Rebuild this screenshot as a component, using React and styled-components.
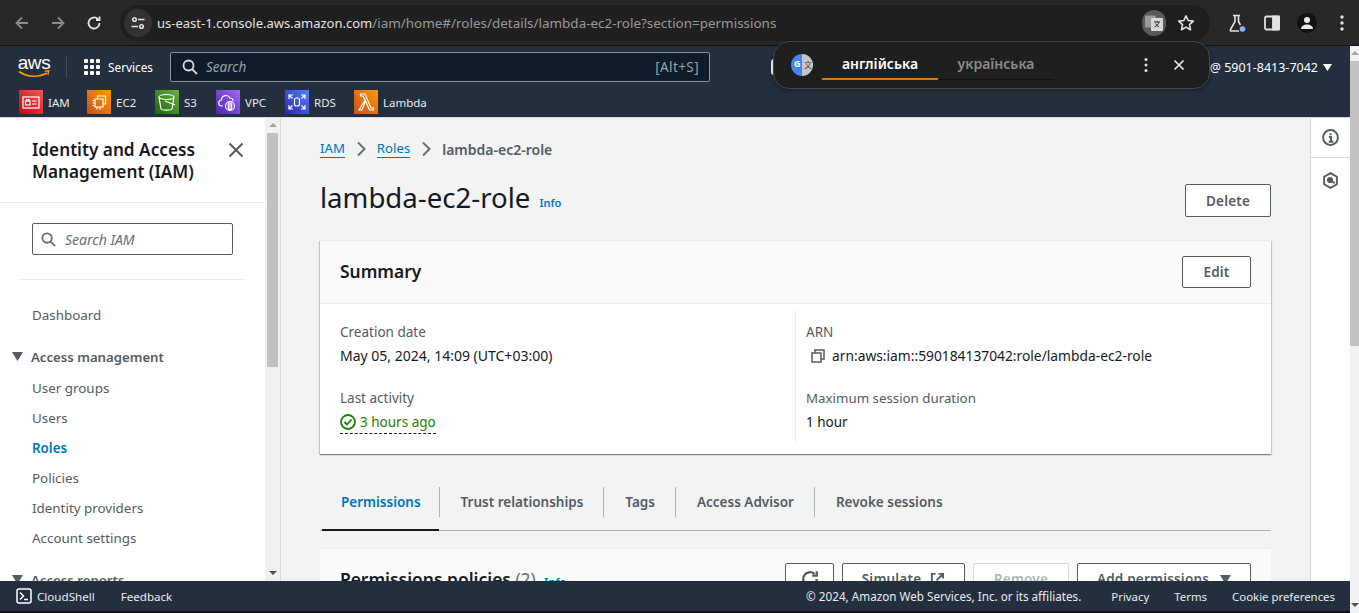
import React from "react";
import styled, { createGlobalStyle } from "styled-components";

const GlobalStyle = createGlobalStyle`
	html, body {
		margin: 0;
		padding: 0;
		height: 100%;
		overflow: hidden;
		background: #fff;
		font-family: "Noto Sans", "Open Sans", sans-serif;
	}
	* { box-sizing: border-box; }
`;

const services = [
	{ name: "IAM", from: "#bd0816", to: "#ff5252", icon: "iam", w: 68 },
	{ name: "EC2", from: "#c8511b", to: "#ff9900", icon: "ec2", w: 68 },
	{ name: "S3", from: "#1b660f", to: "#6cae3e", icon: "s3", w: 61 },
	{ name: "VPC", from: "#4d27a8", to: "#a166ff", icon: "vpc", w: 69 },
	{ name: "RDS", from: "#2e27ad", to: "#527fff", icon: "rds", w: 69 },
	{ name: "Lambda", from: "#c8511b", to: "#ff9900", icon: "lambda", w: 80 },
];

const navItems = ["User groups", "Users", "Roles", "Policies", "Identity providers", "Account settings"];

const tabs = ["Permissions", "Trust relationships", "Tags", "Access Advisor", "Revoke sessions"];

function ServiceGlyph({ icon }) {
	const p = { fill: "none", stroke: "#fff", strokeWidth: 1.2 };
	if (icon === "iam")
		return (
			<svg width="24" height="24" viewBox="0 0 24 24">
				<rect x="4" y="7" width="16" height="11" {...p} />
				<rect x="6.500" y="11" width="4.500" height="4" {...p} />
				<path d="M7.500 11V9.500h2.500V11M13 11h4.500M13 14h4.500" {...p} />
			</svg>
		);
	if (icon === "ec2")
		return (
			<svg width="24" height="24" viewBox="0 0 24 24">
				<path d="M8 9h8v8H8zM10.500 9V6h8v8H16M5.500 10.500H8M5.500 13H8M5.500 15.500H8M10 17v2.500M13 17v2.500" {...p} />
			</svg>
		);
	if (icon === "s3")
		return (
			<svg width="24" height="24" viewBox="0 0 24 24">
				<ellipse cx="11.500" cy="7" rx="7.500" ry="2.500" {...p} />
				<path d="M4 7l2 12c1 1.500 10 1.500 11 0l2-12M10 11l10 4" {...p} />
			</svg>
		);
	if (icon === "vpc")
		return (
			<svg width="24" height="24" viewBox="0 0 24 24">
				<path d="M7 16H6a3 3 0 0 1-.5-6A4.500 4.500 0 0 1 14 8a3 3 0 0 1 3 3" {...p} />
				<circle cx="14" cy="16" r="4.500" {...p} />
				<path d="M14 11.500v9M12.300 12.500v7h3.400v-7" {...p} />
			</svg>
		);
	if (icon === "rds")
		return (
			<svg width="24" height="24" viewBox="0 0 24 24">
				<rect x="9.500" y="8" width="5" height="8" rx="2" {...p} />
				<path d="M4 9V5h4M20 9V5h-4M4 15v4h4M20 15v4h-4M4 5l3.500 3.500M20 5l-3.500 3.500M4 19l3.500-3.500M20 19l-3.500-3.500" {...p} />
			</svg>
		);
	return (
		<svg width="24" height="24" viewBox="0 0 24 24">
			<path d="M5 20l6-10-2-4H6.500V4H11l6 14h2.500v2H15.500L11.500 11 8 20z" {...p} />
		</svg>
	);
}

function Triangle({ size = 10, color = "#545b64" }) {
	return (
		<svg width={size} height={size} viewBox="0 0 10 10">
			<path d="M0 1h10L5 9z" fill={color} />
		</svg>
	);
}

export default function App() {
	return (
		<>
			<GlobalStyle />
			<Window>
				<ChromeBar>
					<NavGlyph $dim>
						<path d="M16 10H5M10 4.500 4.500 10l5.500 5.500" />
					</NavGlyph>
					<NavGlyph $dim>
						<path d="M4 10h11M10 4.500l5.500 5.500-5.500 5.500" />
					</NavGlyph>
					<NavGlyph>
						<path d="M15.500 10a5.500 5.500 0 1 1-1.600-3.900M15.500 3.500v3.500H12" />
					</NavGlyph>
					<Omnibox>
						<SiteInfo>
							<svg width="16" height="16" viewBox="0 0 16 16" fill="none" stroke="#e3e3e3" strokeWidth="1.500">
								<circle cx="4.500" cy="4.500" r="1.800" />
								<circle cx="11.500" cy="11.500" r="1.800" />
								<path d="M8 4.500h6.500M1.500 11.500H8" />
							</svg>
						</SiteInfo>
						<UrlText>
							us-east-1.console.aws.amazon.com<UrlRest>/iam/home#/roles/details/lambda-ec2-role?section=permissions</UrlRest>
						</UrlText>
						<OmniRight>
							<TranslateChip>
								<svg width="20" height="20" viewBox="0 0 20 20">
									<rect x="1" y="2.500" width="11" height="12" rx="1" fill="#9a9a9a" />
									<rect x="7" y="5" width="12" height="13" rx="1" fill="#d8d8d8" />
									<path d="M10 9h6M13 8v1.500M15 9c-.7 2.500-2.500 4-4.500 5M11.500 10.500c.8 1.500 2 2.800 3.500 3.500" fill="none" stroke="#333" strokeWidth="1" />
								</svg>
							</TranslateChip>
							<svg width="20" height="20" viewBox="0 0 20 20" fill="none" stroke="#e3e3e3" strokeWidth="1.600" strokeLinejoin="round">
								<path d="M10 2.800l2.200 4.700 5.100.6-3.800 3.500 1 5.100-4.500-2.600-4.500 2.600 1-5.100L2.700 8.100l5.100-.6z" />
							</svg>
						</OmniRight>
					</Omnibox>
					<ChromeTools>
						<svg width="20" height="20" viewBox="0 0 20 20" fill="none" stroke="#e3e3e3" strokeWidth="1.600">
							<path d="M6 2.500h7M8 2.500v6L3.500 16.500c-.4.800 0 1.500.9 1.500H12M11.500 2.500v6l2 3.500" />
							<circle cx="15.500" cy="16" r="2.800" fill="#8ab4f8" stroke="none" />
						</svg>
						<svg width="20" height="20" viewBox="0 0 20 20" fill="none" stroke="#e3e3e3" strokeWidth="1.800">
							<rect x="3" y="3.500" width="14" height="13" rx="1.500" />
							<rect x="11" y="3.500" width="6" height="13" fill="#e3e3e3" />
						</svg>
						<ProfileDot>
							<svg width="14" height="14" viewBox="0 0 14 14" fill="#e8eaed">
								<circle cx="7" cy="4" r="3" />
								<path d="M1 13c0-3 3-4.500 6-4.500s6 1.500 6 4.500z" />
							</svg>
						</ProfileDot>
						<svg width="20" height="20" viewBox="0 0 20 20" fill="#e3e3e3">
							<circle cx="10" cy="4" r="1.700" />
							<circle cx="10" cy="10" r="1.700" />
							<circle cx="10" cy="16" r="1.700" />
						</svg>
					</ChromeTools>
				</ChromeBar>

				<Viewport>
					<PageColumn>
						<AwsHeader>
							<TopRow>
								<AwsLogo>
									<AwsWord>aws</AwsWord>
									<svg width="32" height="9" viewBox="0 0 32 9" fill="none">
										<path d="M1 1.500c8 6 20 6 28 1.500" stroke="#ff9900" strokeWidth="1.600" />
										<path d="M26.500 1.200l4.300-.4-.9 4.200" stroke="#ff9900" strokeWidth="1.300" />
									</svg>
								</AwsLogo>
								<HeaderDivider />
								<ServicesMenu>
									<GridDots>
										{Array.from({ length: 9 }).map((_, i) => (
											<i key={i} />
										))}
									</GridDots>
									<span>Services</span>
								</ServicesMenu>
								<GlobalSearch>
									<svg width="16" height="16" viewBox="0 0 16 16" fill="none" stroke="#d5dbdb" strokeWidth="1.800">
										<circle cx="6.500" cy="6.500" r="5" />
										<path d="M10 10l5 5" />
									</svg>
									<SearchHint>Search</SearchHint>
									<Shortcut>[Alt+S]</Shortcut>
								</GlobalSearch>
								<HiddenGlyph />
								<AccountMenu>
									<span>@ 5901-8413-7042</span>
									<Triangle size={9} color="#fff" />
								</AccountMenu>
							</TopRow>
							<ShortcutRow>
								{services.map((s) => (
									<ServiceLink key={s.name} $w={s.w}>
										<ServiceIcon $from={s.from} $to={s.to}>
											<ServiceGlyph icon={s.icon} />
										</ServiceIcon>
										<span>{s.name}</span>
									</ServiceLink>
								))}
							</ShortcutRow>
						</AwsHeader>

						<Body>
							<SideNav>
								<SideTitleRow>
									<SideTitle>Identity and Access Management (IAM)</SideTitle>
									<svg width="16" height="16" viewBox="0 0 16 16" stroke="#545b64" strokeWidth="2" fill="none">
										<path d="M1.500 1.500l13 13M14.500 1.500l-13 13" />
									</svg>
								</SideTitleRow>
								<SideSearchWrap>
									<SideSearch>
										<svg width="15" height="15" viewBox="0 0 16 16" fill="none" stroke="#687078" strokeWidth="2">
											<circle cx="6.500" cy="6.500" r="5" />
											<path d="M10 10l5 5" />
										</svg>
										<span>Search IAM</span>
									</SideSearch>
								</SideSearchWrap>
								<NavLink $first>Dashboard</NavLink>
								<SectionHead>
									<Triangle size={11} />
									<span>Access management</span>
								</SectionHead>
								{navItems.map((n) => (
									<NavLink key={n} $active={n === "Roles"}>
										{n}
									</NavLink>
								))}
								<SectionHead>
									<Triangle size={11} />
									<span>Access reports</span>
								</SectionHead>
							</SideNav>
							<SideScroll>
								<ScrollArrow />
								<SideThumb />
								<ScrollFill />
								<ScrollArrow $down />
							</SideScroll>

							<Main>
								<Crumbs>
									<CrumbLink>IAM</CrumbLink>
									<CrumbSep viewBox="0 0 10 16">
										<path d="M2 1.500L8.500 8 2 14.500" />
									</CrumbSep>
									<CrumbLink>Roles</CrumbLink>
									<CrumbSep viewBox="0 0 10 16">
										<path d="M2 1.500L8.500 8 2 14.500" />
									</CrumbSep>
									<CrumbCurrent>lambda-ec2-role</CrumbCurrent>
								</Crumbs>
								<TitleRow>
									<PageTitle>lambda-ec2-role</PageTitle>
									<TitleInfo>Info</TitleInfo>
									<Spacer />
									<Button $w={86} $h={33}>Delete</Button>
								</TitleRow>

								<Card>
									<CardHead>
										<CardTitle>Summary</CardTitle>
										<Button $w={69} $h={32}>Edit</Button>
									</CardHead>
									<SummaryGrid>
										<SummaryCol>
											<Field>
												<FieldLabel>Creation date</FieldLabel>
												<FieldValue>May 05, 2024, 14:09 (UTC+03:00)</FieldValue>
											</Field>
											<Field>
												<FieldLabel>Last activity</FieldLabel>
												<ActivityValue>
													<svg width="16" height="16" viewBox="0 0 16 16" fill="none" stroke="#1d8102" strokeWidth="1.800">
														<circle cx="8" cy="8" r="7" />
														<path d="M4.500 8l2.500 2.500 4.500-5" />
													</svg>
													<span>3 hours ago</span>
												</ActivityValue>
											</Field>
										</SummaryCol>
										<SummaryCol $right>
											<Field>
												<FieldLabel>ARN</FieldLabel>
												<ArnValue>
													<svg width="14" height="14" viewBox="0 0 14 14" fill="none" stroke="#545b64" strokeWidth="1.500">
														<rect x="1" y="4" width="9" height="9" />
														<path d="M4 4V1h9v9h-3" />
													</svg>
													<span>arn:aws:iam::590184137042:role/lambda-ec2-role</span>
												</ArnValue>
											</Field>
											<Field>
												<SessionLabel>Maximum session duration</SessionLabel>
												<ShortValue>1 hour</ShortValue>
											</Field>
										</SummaryCol>
									</SummaryGrid>
								</Card>

								<TabBar>
									{tabs.map((t, i) => (
										<Tab key={t} $active={i === 0} $last={i === tabs.length - 1}>
											{t}
										</Tab>
									))}
								</TabBar>

								<PolicyCard>
									<PolicyTitle>
										Permissions policies <Count>(2)</Count> <PolicyInfo>Info</PolicyInfo>
									</PolicyTitle>
									<PolicyActions>
										<Button $w={49} $h={32}>
											<svg width="18" height="18" viewBox="0 0 16 16" fill="none" stroke="#545b64" strokeWidth="2">
												<path d="M14 8a6 6 0 1 1-2-4.500M14 1v4h-4" />
											</svg>
										</Button>
										<Button $w={123} $h={32} $gap={9}>
											Simulate
											<svg width="15" height="15" viewBox="0 0 16 16" fill="none" stroke="#545b64" strokeWidth="2">
												<path d="M6 2H2v12h12v-4M9 2h5v5M14 2L7 9" />
											</svg>
										</Button>
										<Button $w={96} $h={32} $disabled>Remove</Button>
										<Button $w={174} $h={32} $gap={11}>
											Add permissions
											<Triangle size={11} />
										</Button>
									</PolicyActions>
								</PolicyCard>
							</Main>

							<Rail>
								<RailSlot $line>
									<svg width="17" height="17" viewBox="0 0 16 16" fill="none" stroke="#545b64" strokeWidth="1.800">
										<circle cx="8" cy="8" r="7" />
										<path d="M6.500 7.500H8.500V12M6.300 12h4.400M8 4v1.800" />
									</svg>
								</RailSlot>
								<RailSlot>
									<svg width="17" height="17" viewBox="0 0 16 16" fill="none" stroke="#545b64" strokeWidth="1.800">
										<path d="M8 1l6 3.500v7L8 15l-6-3.500v-7z" />
										<circle cx="7.500" cy="7.500" r="2" fill="#545b64" />
										<path d="M8.500 8l3.500 2.500" />
									</svg>
								</RailSlot>
							</Rail>
						</Body>

						<Footer>
							<FooterLink>
								<svg width="16" height="16" viewBox="0 0 16 16" fill="none" stroke="#fff" strokeWidth="1.500">
									<rect x="1" y="1" width="14" height="14" rx="2" />
									<path d="M4 4.500L7.500 8 4 11.500M8 11.500h4" />
								</svg>
								<span>CloudShell</span>
							</FooterLink>
							<FeedbackLink>Feedback</FeedbackLink>
							<Spacer />
							<Copyright>© 2024, Amazon Web Services, Inc. or its affiliates.</Copyright>
							<FooterNav>
								<span>Privacy</span>
								<span>Terms</span>
								<span>Cookie preferences</span>
							</FooterNav>
						</Footer>
					</PageColumn>
					<PageScroll>
						<ScrollArrow />
						<PageThumb />
						<ScrollFill />
						<ScrollArrow $down />
					</PageScroll>
				</Viewport>

				<TranslatePopup>
					<TranslateBadge>
						<BadgeG>G</BadgeG>
						<BadgeWen>文</BadgeWen>
					</TranslateBadge>
					<LangTab $active>англійська</LangTab>
					<LangTab>українська</LangTab>
					<Spacer />
					<svg width="16" height="16" viewBox="0 0 16 16" fill="#e3e3e3">
						<circle cx="8" cy="2.500" r="1.500" />
						<circle cx="8" cy="8" r="1.500" />
						<circle cx="8" cy="13.500" r="1.500" />
					</svg>
					<PopupClose viewBox="0 0 12 12">
						<path d="M1.500 1.500l9 9M10.500 1.500l-9 9" />
					</PopupClose>
				</TranslatePopup>
			</Window>
		</>
	);
}

const Window = styled.div`
	position: relative;
	width: 1359px;
	height: 613px;
	overflow: hidden;
	display: flex;
	flex-direction: column;
`;

const ChromeBar = styled.div`
	height: 46px;
	flex: none;
	background: #282828;
	border-bottom: 1px solid #111;
	display: flex;
	align-items: center;
	padding-left: 12px;
	gap: 16px;
`;

const NavGlyph = styled.svg.attrs({ width: 20, height: 20, viewBox: "0 0 20 20" })`
	flex: none;
	fill: none;
	stroke: ${(p) => (p.$dim ? "#8c8c8c" : "#e3e3e3")};
	stroke-width: 1.8;
`;

const Omnibox = styled.div`
	flex: none;
	width: 1090px;
	height: 36px;
	border-radius: 18px;
	background: #1f1f1f;
	display: flex;
	align-items: center;
	padding: 0 14px 0 4px;
`;

const SiteInfo = styled.div`
	width: 28px;
	height: 28px;
	border-radius: 50%;
	background: #333;
	display: flex;
	align-items: center;
	justify-content: center;
`;

const UrlText = styled.div`
	margin-left: 5px;
	font-size: 13px;
	color: #e3e3e3;
	white-space: nowrap;
`;

const UrlRest = styled.span`
	color: #9a9a9a;
	font-size: 13.45px;
`;

const OmniRight = styled.div`
	margin-left: auto;
	display: flex;
	align-items: center;
	gap: 10px;
`;

const TranslateChip = styled.div`
	width: 24px;
	height: 26px;
	border-radius: 12px;
	background: #5a5a5a;
	display: flex;
	align-items: center;
	justify-content: center;
`;

const ChromeTools = styled.div`
	display: flex;
	align-items: center;
	gap: 15px;
	margin-left: 1px;
`;

const ProfileDot = styled.div`
	width: 20px;
	height: 20px;
	border-radius: 50%;
	background: #111;
	display: flex;
	align-items: center;
	justify-content: center;
`;

const Viewport = styled.div`
	flex: 1;
	min-height: 0;
	display: flex;
`;

const PageColumn = styled.div`
	flex: 1;
	min-width: 0;
	display: flex;
	flex-direction: column;
`;

const AwsHeader = styled.header`
	flex: none;
	height: 71px;
	background: #232f3e;
	color: #fff;
`;

const TopRow = styled.div`
	height: 42px;
	display: flex;
	align-items: center;
	padding-left: 18px;
`;

const AwsLogo = styled.div`
	width: 32px;
	height: 28px;
	display: flex;
	flex-direction: column;
	align-items: center;
	svg {
		margin-top: -3px;
	}
`;

const AwsWord = styled.span`
	font-family: "Liberation Sans", sans-serif;
	font-size: 19px;
	line-height: 20px;
	letter-spacing: -0.4px;
	color: #fff;
`;

const HeaderDivider = styled.div`
	width: 1px;
	height: 22px;
	background: #3f4b5b;
	margin: 0 17px 0 16px;
`;

const ServicesMenu = styled.div`
	display: flex;
	align-items: center;
	gap: 8px;
	font-size: 11.8px;
	width: 86px;
`;

const GridDots = styled.div`
	display: grid;
	grid-template-columns: repeat(3, 4px);
	grid-auto-rows: 4px;
	gap: 2px;
	i {
		background: #fff;
		border-radius: 1px;
	}
`;

const GlobalSearch = styled.div`
	width: 540px;
	height: 30px;
	background: #0f1b2a;
	border: 1px solid #879596;
	border-radius: 2px;
	display: flex;
	align-items: center;
	padding: 0 10px 0 11px;
	color: #95a5a6;
	font-size: 13.5px;
`;

const SearchHint = styled.span`
	font-style: italic;
	margin-left: 8px;
`;

const Shortcut = styled.span`
	margin-left: auto;
	letter-spacing: 0.4px;
`;

const HiddenGlyph = styled.div`
	width: 14px;
	height: 16px;
	margin-left: 61px;
	border-radius: 3px;
	background: #fff;
`;

const AccountMenu = styled.div`
	margin-left: auto;
	margin-right: 18px;
	display: flex;
	align-items: center;
	gap: 5px;
	font-size: 12.5px;
	color: #fff;
`;

const ShortcutRow = styled.div`
	height: 29px;
	display: flex;
	align-items: flex-start;
	padding: 2px 0 0 19px;
`;

const ServiceLink = styled.div`
	flex: none;
	width: ${(p) => p.$w}px;
	display: flex;
	align-items: center;
	gap: 5px;
	font-size: 11.5px;
	color: #eaeded;
	height: 24px;
`;

const ServiceIcon = styled.div`
	width: 24px;
	height: 24px;
	background: linear-gradient(to top right, ${(p) => p.$from}, ${(p) => p.$to});
	display: flex;
`;

const Body = styled.div`
	flex: 1;
	min-height: 0;
	display: flex;
	overflow: hidden;
	background: #f2f3f3;
	border-top: 1px solid #d5dbdb;
`;

const SideNav = styled.nav`
	flex: none;
	width: 265px;
	background: #fff;
	overflow: hidden;
`;

const SideTitleRow = styled.div`
	height: 85px;
	padding: 21px 21px 0 32px;
	display: flex;
	justify-content: space-between;
	align-items: flex-start;
	border-bottom: 1px solid #eaeded;
	svg {
		flex: none;
		margin-top: 3px;
	}
`;

const SideTitle = styled.h2`
	margin: 0;
	width: 185px;
	font-size: 17.2px;
	line-height: 22px;
	font-weight: 600;
	color: #16191f;
`;

const SideSearchWrap = styled.div`
	margin: 0 20px;
	padding: 20px 12px 24px;
	border-bottom: 1px solid #eaeded;
`;

const SideSearch = styled.div`
	width: 201px;
	height: 32px;
	border: 1px solid #545b64;
	border-radius: 2px;
	display: flex;
	align-items: center;
	gap: 9px;
	padding-left: 8px;
	font-size: 14px;
	font-style: italic;
	color: #687078;
`;

const NavLink = styled.div`
	height: 30px;
	line-height: 30px;
	padding-left: 32px;
	font-size: 13.4px;
	color: ${(p) => (p.$active ? "#0073bb" : "#545b64")};
	font-weight: ${(p) => (p.$active ? 600 : 400)};
	margin-top: ${(p) => (p.$first ? 20 : 0)}px;
`;

const SectionHead = styled.div`
	height: 32px;
	padding: 0 0 1px 12px;
	display: flex;
	align-items: center;
	gap: 8px;
	margin-top: 11px;
	font-size: 13.2px;
	font-weight: 600;
	color: #545b64;
`;

const SideScroll = styled.div`
	flex: none;
	width: 16px;
	background: #f1f1f1;
	border-right: 1px solid #d5dbdb;
	display: flex;
	flex-direction: column;
	align-items: center;
`;

const ScrollArrow = styled.div`
	flex: none;
	height: 15px;
	width: 100%;
	position: relative;
	&::after {
		content: "";
		position: absolute;
		left: calc(50% - 4px);
		top: 5px;
		border-left: 4px solid transparent;
		border-right: 4px solid transparent;
		${(p) => (p.$down ? "border-top: 4px solid #505050;" : "border-bottom: 4px solid #a3a3a3;")}
	}
`;

const SideThumb = styled.div`
	flex: none;
	width: 11px;
	height: 234px;
	background: #c1c1c1;
`;

const ScrollFill = styled.div`
	flex: 1;
`;

const Main = styled.main`
	flex: 1;
	min-width: 0;
	padding: 0 39px;
	overflow: hidden;
`;

const Crumbs = styled.div`
	height: 52px;
	padding-top: 10px;
	display: flex;
	align-items: center;
	gap: 11px;
	font-size: 13.2px;
`;

const CrumbLink = styled.span`
	color: #0073bb;
	border-bottom: 1px solid #0073bb;
	line-height: 17px;
`;

const CrumbSep = styled.svg`
	width: 10px;
	height: 16px;
	fill: none;
	stroke: #687078;
	stroke-width: 2;
`;

const CrumbCurrent = styled.span`
	color: #545b64;
	font-size: 14px;
	font-weight: 600;
`;

const TitleRow = styled.div`
	height: 70px;
	padding-top: 14px;
	display: flex;
	align-items: flex-start;
`;

const PageTitle = styled.h1`
	margin: -5px 0 0;
	font-size: 27.6px;
	font-weight: 400;
	color: #16191f;
	line-height: 36px;
`;

const InfoLink = styled.span`
	font-size: 11px;
	font-weight: 600;
	color: #0073bb;
`;

const TitleInfo = styled(InfoLink)`
	margin: 11px 0 0 9px;
`;

const PolicyInfo = styled(InfoLink)`
	margin-left: 4px;
`;

const Spacer = styled.div`
	flex: 1;
`;

const Button = styled.div`
	flex: none;
	width: ${(p) => p.$w}px;
	height: ${(p) => p.$h}px;
	background: #fff;
	border: 1px solid ${(p) => (p.$disabled ? "#d5dbdb" : "#545b64")};
	border-radius: 2px;
	display: flex;
	align-items: center;
	justify-content: center;
	gap: ${(p) => p.$gap || 8}px;
	font-size: 13.5px;
	letter-spacing: 0.2px;
	font-weight: 600;
	color: ${(p) => (p.$disabled ? "#aab7b8" : "#545b64")};
`;

const Card = styled.section`
	height: 214px;
	background: #fff;
	border-top: 1px solid #eaeded;
	box-shadow: 0 1px 1px 0 rgba(0, 28, 36, 0.3), 1px 1px 1px 0 rgba(0, 28, 36, 0.15), -1px 1px 1px 0 rgba(0, 28, 36, 0.15);
`;

const CardHead = styled.div`
	height: 63px;
	background: #fafafa;
	border-bottom: 1px solid #eaeded;
	display: flex;
	align-items: center;
	justify-content: space-between;
	padding: 0 20px;
`;

const CardTitle = styled.h2`
	margin: 0 0 2px;
	font-size: 17.4px;
	font-weight: 600;
	color: #16191f;
`;

const SummaryGrid = styled.div`
	display: grid;
	grid-template-columns: 475px 1fr;
	padding-top: 6px;
`;

const SummaryCol = styled.div`
	height: 133px;
	padding-left: ${(p) => (p.$right ? 10 : 20)}px;
	border-left: ${(p) => (p.$right ? "1px solid #eaeded" : "none")};
	display: flex;
	flex-direction: column;
	gap: 24px;
	padding-top: 13px;
`;

const Field = styled.div`
	display: flex;
	flex-direction: column;
	gap: 6px;
	font-size: 13.5px;
	line-height: 18px;
`;

const FieldLabel = styled.div`
	color: #545b64;
`;

const SessionLabel = styled(FieldLabel)`
	font-size: 13.3px;
`;

const FieldValue = styled.div`
	color: #16191f;
	font-size: 14px;
`;

const ShortValue = styled.div`
	color: #16191f;
`;

const ActivityValue = styled.div`
	align-self: flex-start;
	display: flex;
	align-items: center;
	gap: 4px;
	color: #1d8102;
	border-bottom: 1px dashed #16191f;
	padding-bottom: 2px;
`;

const ArnValue = styled.div`
	display: flex;
	align-items: center;
	gap: 7px;
	padding-left: 5px;
	font-size: 13.8px;
	color: #16191f;
`;

const TabBar = styled.div`
	margin-top: 33px;
	height: 44px;
	padding-left: 2px;
	border-bottom: 1px solid #aab7b8;
	display: flex;
`;

const Tab = styled.div`
	position: relative;
	height: 44px;
	padding: 0 20px ${(p) => (p.$active ? 12 : 14)}px 22px;
	display: flex;
	align-items: center;
	font-size: 13.5px;
	font-weight: 600;
	white-space: nowrap;
	color: ${(p) => (p.$active ? "#0073bb" : "#545b64")};
	border-bottom: ${(p) => (p.$active ? "2px solid #16191f" : "none")};
	${(p) => p.$active && "padding-left: 19px; padding-right: 18px;"}
	&::after {
		content: "";
		display: ${(p) => (p.$last ? "none" : "block")};
		position: absolute;
		right: -1px;
		top: 0;
		width: 1px;
		height: 30px;
		background: #aab7b8;
	}
`;

const PolicyCard = styled.section`
	margin-top: 17px;
	height: 100px;
	background: #fafafa;
	border-top: 1px solid #eaeded;
	display: flex;
	justify-content: space-between;
	align-items: flex-start;
	padding: 14px 20px 0;
`;

const PolicyTitle = styled.h2`
	margin: 0;
	font-size: 17.4px;
	line-height: 32px;
	font-weight: 600;
	color: #16191f;
`;

const Count = styled.span`
	font-weight: 400;
	color: #687078;
`;

const PolicyActions = styled.div`
	display: flex;
	gap: 8px;
`;

const Rail = styled.aside`
	flex: none;
	width: 40px;
	background: #fff;
	border-left: 1px solid #d5dbdb;
`;

const RailSlot = styled.div`
	height: ${(p) => (p.$line ? 40 : 44)}px;
	display: flex;
	align-items: center;
	justify-content: center;
	border-bottom: ${(p) => (p.$line ? "1px solid #d5dbdb" : "none")};
`;

const Footer = styled.footer`
	flex: none;
	height: 32px;
	background: #232f3e;
	border-bottom: 2px solid #111;
	display: flex;
	align-items: center;
	padding: 0 24px 0 16px;
	font-size: 11.6px;
	color: #eaeded;
`;

const FooterLink = styled.div`
	display: flex;
	align-items: center;
	gap: 5px;
`;

const FeedbackLink = styled.span`
	margin-left: 26px;
`;

const Copyright = styled.span`
	font-size: 11.7px;
`;

const FooterNav = styled.div`
	display: flex;
	gap: 25px;
	margin-left: 30px;
	margin-right: -9px;
	font-size: 11.4px;
`;

const PageScroll = styled.div`
	flex: none;
	width: 9px;
	background: #f1f1f1;
	display: flex;
	flex-direction: column;
`;

const PageThumb = styled.div`
	flex: none;
	height: 285px;
	background: #c1c1c1;
`;

const TranslatePopup = styled.div`
	position: absolute;
	left: 773px;
	top: 41px;
	width: 437px;
	height: 48px;
	border-radius: 16px;
	background: #1f1f1f;
	border: 1px solid #474747;
	display: flex;
	align-items: center;
	padding: 0 24px 0 17px;
	box-shadow: 0 1px 4px rgba(0, 0, 0, 0.4);
`;

const TranslateBadge = styled.div`
	position: relative;
	width: 22px;
	height: 22px;
	border-radius: 50%;
	overflow: hidden;
	flex: none;
	margin-right: 9px;
	background: linear-gradient(to right, #4285f4 50%, #c7c7c7 50%);
`;

const BadgeG = styled.span`
	position: absolute;
	left: 3px;
	top: 4px;
	font-size: 9px;
	line-height: 12px;
	font-weight: 700;
	color: #fff;
`;

const BadgeWen = styled.span`
	position: absolute;
	right: 1px;
	top: 6px;
	font-family: "Noto Sans CJK SC", sans-serif;
	font-size: 8px;
	line-height: 10px;
	color: #444;
`;

const LangTab = styled.div`
	width: 116px;
	height: 32px;
	margin-bottom: 2px;
	display: flex;
	align-items: center;
	justify-content: center;
	font-size: 14px;
	font-weight: 600;
	color: ${(p) => (p.$active ? "#fff" : "#8c8c8c")};
	border-bottom: ${(p) => (p.$active ? "2px solid #e37400" : "1px solid #111")};
`;

const PopupClose = styled.svg`
	width: 12px;
	height: 12px;
	margin-left: 19px;
	fill: none;
	stroke: #e8e8e8;
	stroke-width: 1.7;
`;
